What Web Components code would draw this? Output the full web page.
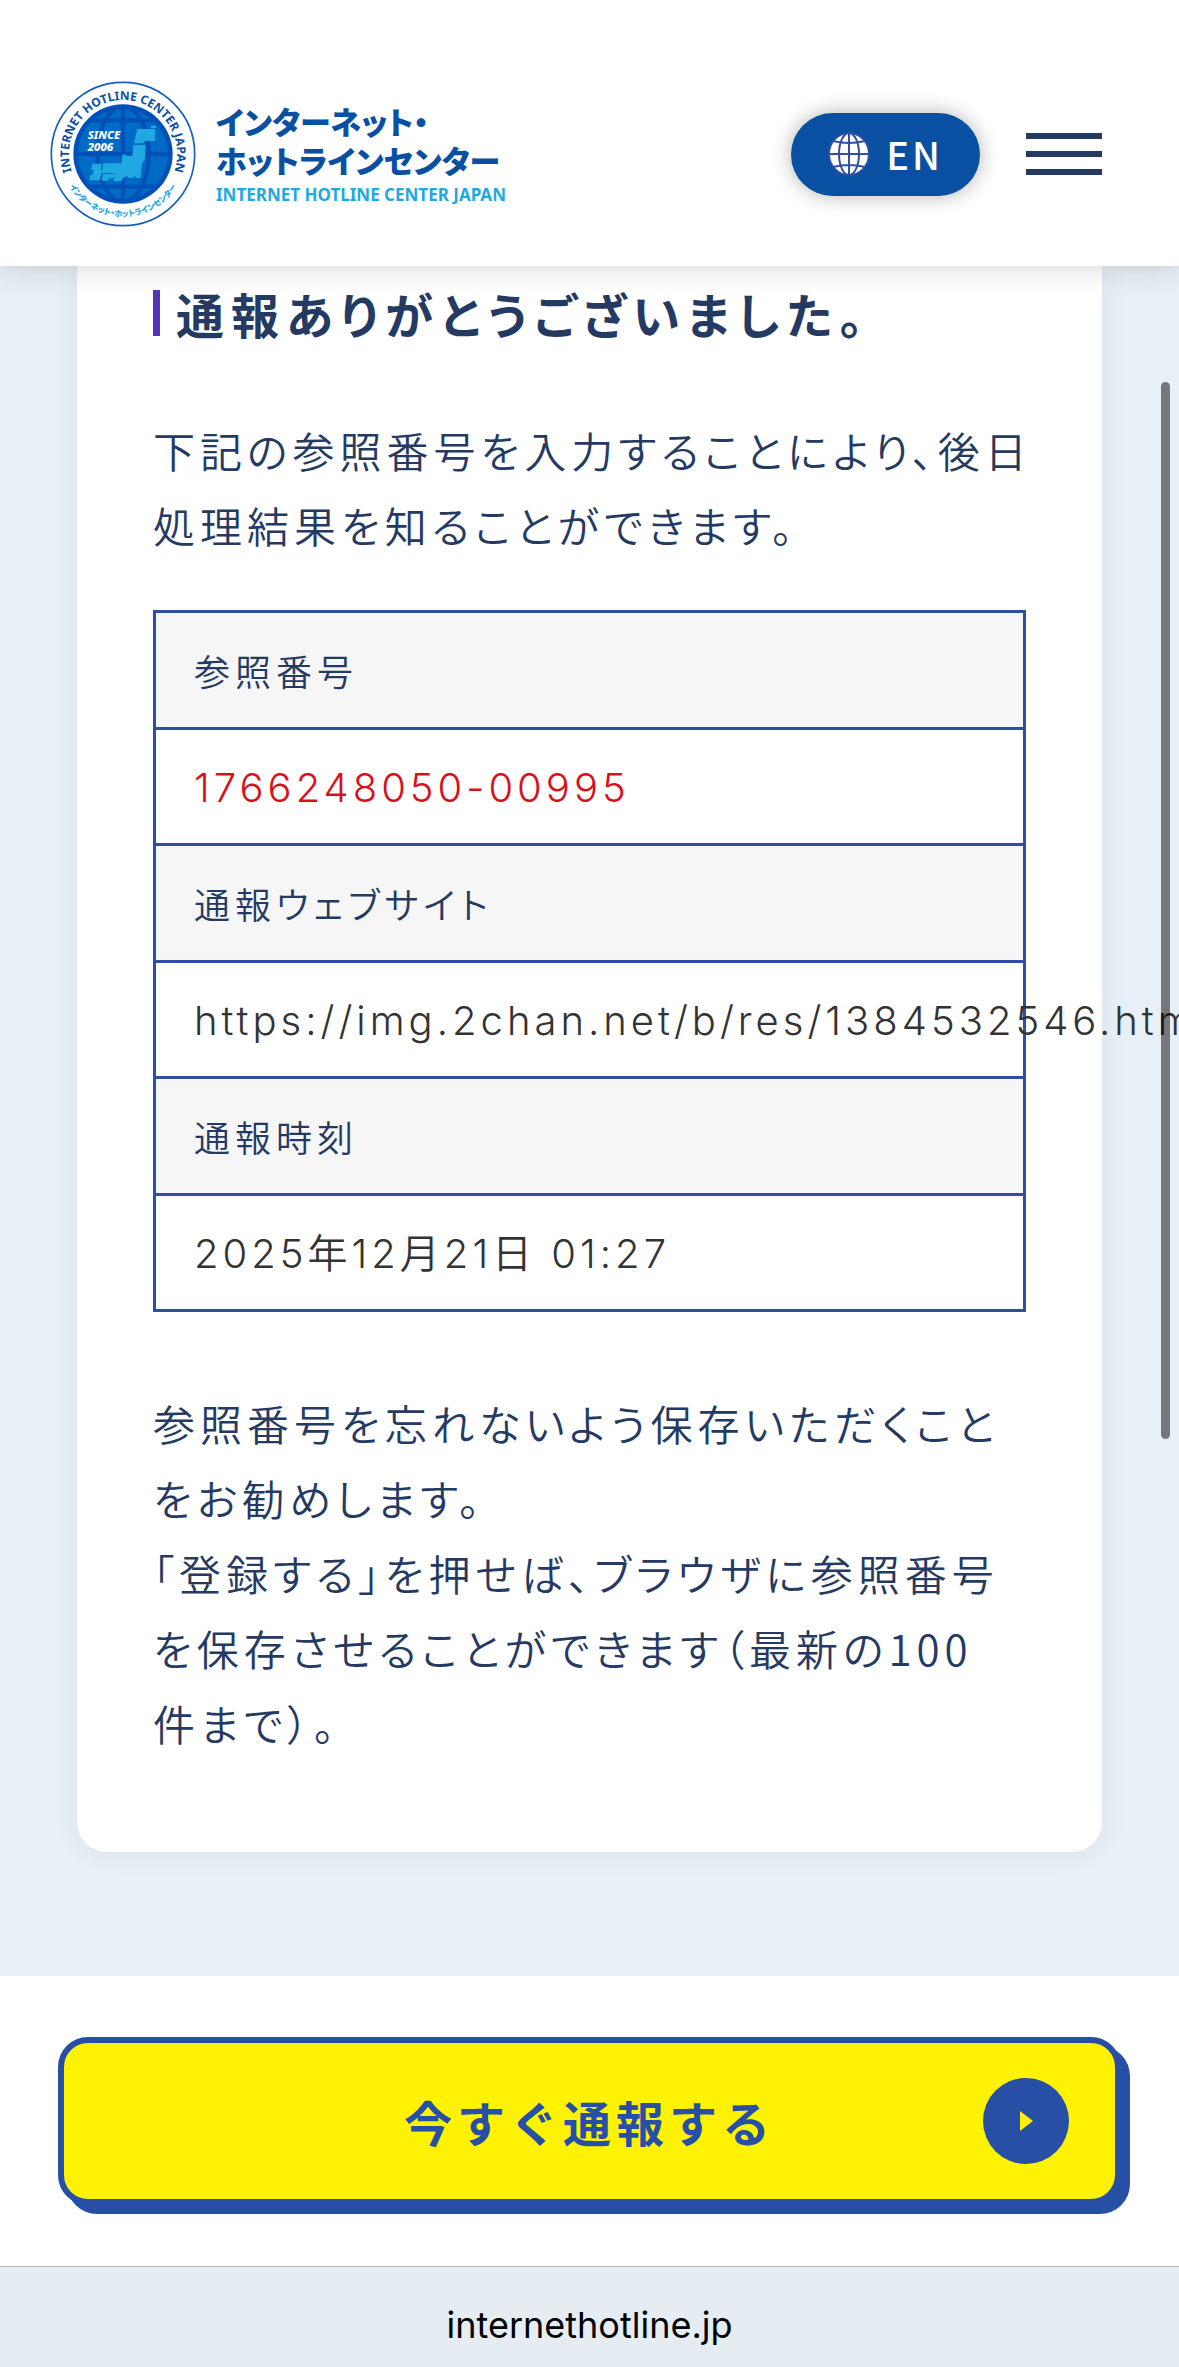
<!DOCTYPE html>
<html lang="ja">
<head>
<meta charset="utf-8">
<meta name="viewport" content="width=device-width, initial-scale=1">
<title>インターネット・ホットラインセンター</title>
<style>
html, body { margin: 0; }
body {
    --navy: #253a62;
    --blue: #264fa5;
    --line: #304fa2;
    --pale: #e8f0f7;
    position: relative;
    display: flex;
    flex-direction: column;
    min-height: 100vh;
    overflow-x: hidden;
    background: #fff;
    color: var(--navy);
    font-family: "Noto Sans CJK JP", "Noto Sans", sans-serif;
}
</style>
</head>
<body>

<site-header>
    <site-logo slot="logo"></site-logo>
    <lang-button>EN</lang-button>
    <menu-button></menu-button>
</site-header>

<report-card>
    <section-title>通報ありがとうございました。</section-title>
    <body-text>下記の参照番号を入力することにより、後日<br>処理結果を知ることができます。</body-text>
    <report-table></report-table>
    <body-text>参照番号を忘れないよう保存いただくこと<br>をお勧めします。<br>「登録する」を押せば、ブラウザに参照番号<br>を保存させることができます（最新の100<br>件まで）。</body-text>
</report-card>

<report-cta>今すぐ通報する</report-cta>
<address-bar>internethotline.jp</address-bar>
<scroll-thumb></scroll-thumb>

<script>
function define(name, html) {
    const template = document.createElement('template');
    template.innerHTML = html;
    customElements.define(name, class extends HTMLElement {
        constructor() {
            super();
            this.attachShadow({ mode: 'open' }).append(template.content.cloneNode(true));
        }
    });
}

/* Header */
define('site-header', `
<style>
:host {
    position: relative;
    z-index: 10;
    display: block;
    background: #fff;
    box-shadow: 0 0 30px rgba(0,0,0,0.18);
}
header {
    display: flex;
    align-items: center;
    justify-content: space-between;
    padding: 81px 77px 39px 50px;
}
.tools { display: flex; align-items: center; gap: 46px; }
</style>
<header>
    <slot name="logo"></slot>
    <div class="tools"><slot></slot></div>
</header>`);

define('site-logo', `
<style>
:host { display: block; }
a {
    display: flex;
    align-items: center;
    gap: 20px;
    color: #0950a3;
    text-decoration: none;
}
svg { display: block; width: 146px; height: 146px; }
.text { padding-top: 4px; }
.name {
    display: block;
    font-size: 31px;
    font-weight: 900;
    line-height: 39px;
    font-feature-settings: "palt";
    white-space: nowrap;
}
.en {
    display: block;
    color: #1fa8e1;
    font-family: "Noto Sans", sans-serif;
    font-size: 17px;
    font-weight: 700;
    line-height: 32px;
    white-space: nowrap;
}
</style>
<a href="#">
    <svg viewBox="59 63 438 438" aria-hidden="true">
        <defs>
            <path id="upper" d="M138.600 364.500A162 162 0 1 1 417.400 364.500"/>
            <path id="lower" d="M106 358A188 188 0 0 0 450 358"/>
            <clipPath id="disc"><circle cx="278" cy="282" r="135"/></clipPath>
        </defs>
        <circle cx="278" cy="282" r="215" fill="#fff" stroke="#1560b8" stroke-width="5"/>
        <circle cx="278" cy="282" r="149" fill="#0050b8"/>
        <circle cx="278" cy="282" r="135" fill="#006bc4"/>
        <g clip-path="url(#disc)" fill="none" stroke="#0050b8" stroke-width="13">
            <path d="M278 140V424M130 282H426M150 181H406M150 380H406"/>
            <ellipse cx="278" cy="282" rx="77" ry="142"/>
        </g>
        <g fill="#1fa9e2">
            <path d="M362 198h15v6h-15zM322 207h52v36h-28l-9 7h-26l6-27z"/>
            <path d="M309 255h37l-3 45-7 8-6 46h-12l-1-6-14 6h-8l-5-6-12 6-5 9h-22l1-24h-37l3-29h56l2-25 10-2 4 5 16-1z"/>
            <path d="M186 311h28l-3 18 6 2-9 30h-30l1-15 9-2 1-14h-7zM218 342h35l-4 13h-14l-2 7h-19z"/>
        </g>
        <g fill="#fff" font-family="Noto Sans, sans-serif" font-size="34" font-weight="800" font-style="italic">
            <text x="172" y="236">SINCE</text>
            <text x="172" y="274">2006</text>
        </g>
        <text fill="#0950a3" font-family="Noto Sans, sans-serif" font-size="36" font-weight="700" text-anchor="middle"><textPath href="#upper" startOffset="50%">INTERNET HOTLINE CENTER JAPAN</textPath></text>
        <text fill="#1fa8e1" font-size="24" font-weight="900" text-anchor="middle" style="font-feature-settings:'palt'"><textPath href="#lower" startOffset="50%">インターネット・ホットラインセンター</textPath></text>
    </svg>
    <span class="text">
        <span class="name">インターネット・<br>ホットラインセンター</span>
        <span class="en">INTERNET HOTLINE CENTER JAPAN</span>
    </span>
</a>`);

define('lang-button', `
<style>
:host { display: block; }
button {
    display: flex;
    align-items: center;
    justify-content: center;
    gap: 16px;
    width: 189px;
    height: 83px;
    padding: 0;
    border: 0;
    border-radius: 42px;
    background: #0950a3;
    box-shadow: 0 0 20px rgba(0,0,0,0.3);
    color: #fff;
    font-family: inherit;
    font-size: 38px;
    font-weight: 500;
    letter-spacing: 3px;
    line-height: 48px;
}
svg { width: 42px; height: 44px; }
</style>
<button>
    <svg viewBox="0 0 42 44" aria-hidden="true">
        <ellipse cx="21" cy="22" rx="20" ry="21" fill="#fff" stroke="#304fa2" stroke-width="2"/>
        <g fill="none" stroke="#304fa2" stroke-width="2">
            <path d="M21 1v42M1 22h40M5 9q16 4 32 0M5 35q16-4 32 0"/>
            <ellipse cx="21" cy="22" rx="10" ry="21"/>
        </g>
    </svg>
    <slot></slot>
</button>`);

define('menu-button', `
<style>
:host { display: block; }
button {
    display: grid;
    gap: 12px;
    width: 76px;
    padding: 0;
    border: 0;
    background: none;
}
i { height: 6px; background: #253a62; }
</style>
<button aria-label="メニュー"><i></i><i></i><i></i></button>`);

/* Card with the result of the report */
define('report-card', `
<style>
:host {
    display: block;
    padding: 0 77px 124px;
    background: var(--pale);
}
article {
    padding: 15px 76px 92px;
    border-radius: 0 0 30px 30px;
    background: #fff;
    box-shadow: 0 0 30px rgba(0,0,0,0.06);
}
</style>
<article><slot></slot></article>`);

define('section-title', `
<style>
:host { display: block; margin-bottom: 67px; }
h2 {
    display: flex;
    align-items: center;
    gap: 16px;
    margin: 0;
    font-size: 48px;
    font-weight: 700;
    line-height: 64px;
    letter-spacing: 7px;
    font-feature-settings: "palt";
    white-space: nowrap;
}
h2::before {
    content: "";
    width: 7px;
    height: 46px;
    background: #5a32b8;
}
</style>
<h2><slot></slot></h2>`);

define('body-text', `
<style>
:host { display: block; }
p {
    margin: 0;
    font-size: 42px;
    font-weight: 350;
    line-height: 75px;
    letter-spacing: 5px;
    font-feature-settings: "palt";
    white-space: nowrap;
}
</style>
<p><slot></slot></p>`);

define('report-table', `
<style>
:host { display: block; margin: 48px 0 73px; }
table {
    width: 100%;
    table-layout: fixed;
    border-collapse: collapse;
}
th, td {
    padding: 0 38px;
    border: 3px solid var(--line);
    text-align: left;
    font-weight: 350;
    line-height: 64px;
    white-space: nowrap;
    box-sizing: border-box;
}
th {
    height: 117px;
    background: #f6f6f6;
    font-size: 36px;
    letter-spacing: 5px;
    font-feature-settings: "palt";
}
td {
    height: 116px;
    padding-top: 2px;
    color: #333;
    font-family: Inter, "Noto Sans CJK JP", sans-serif;
    font-size: 40px;
    letter-spacing: 4px;
}
td.ref { color: #d7101a; }
</style>
<table>
    <tr><th scope="row">参照番号</th></tr>
    <tr><td class="ref">1766248050-00995</td></tr>
    <tr><th scope="row">通報ウェブサイト</th></tr>
    <tr><td>https://img.2chan.net/b/res/1384532546.htm</td></tr>
    <tr><th scope="row">通報時刻</th></tr>
    <tr><td>2025年12月21日 01:27</td></tr>
</table>`);

/* Bottom of the screen */
define('report-cta', `
<style>
:host {
    display: block;
    padding: 61px 58px;
    background: #fff;
}
a {
    display: grid;
    grid-template-columns: 86px 1fr 86px;
    align-items: center;
    padding: 35px 46px;
    border: 6px solid var(--blue);
    border-radius: 30px;
    background: #fff203;
    box-shadow: 9px 9px 0 var(--blue);
    color: var(--blue);
    font-size: 48px;
    font-weight: 700;
    line-height: 80px;
    letter-spacing: 5px;
    text-align: center;
    text-decoration: none;
}
span { grid-column: 2; }
svg { display: block; width: 86px; height: 86px; }
</style>
<a href="#">
    <span><slot></slot></span>
    <svg viewBox="0 0 86 86" aria-hidden="true">
        <circle cx="43" cy="43" r="43" fill="#264fa5"/>
        <path d="M37 33v20l13-10z" fill="#fff203"/>
    </svg>
</a>`);

define('address-bar', `
<style>
:host {
    display: block;
    flex: 1;
    padding-top: 34px;
    border-top: 1px solid #b7babd;
    background: #e6edf2;
    color: #000;
    font-family: Inter, sans-serif;
    font-size: 36px;
    line-height: 48px;
    text-align: center;
}
</style>
<slot></slot>`);

define('scroll-thumb', `
<style>
:host {
    position: absolute;
    z-index: 20;
    top: 382px;
    right: 9px;
    width: 9px;
    height: 1057px;
    border-radius: 5px;
    background: rgba(0,0,0,0.5);
}
</style>`);
</script>
</body>
</html>
